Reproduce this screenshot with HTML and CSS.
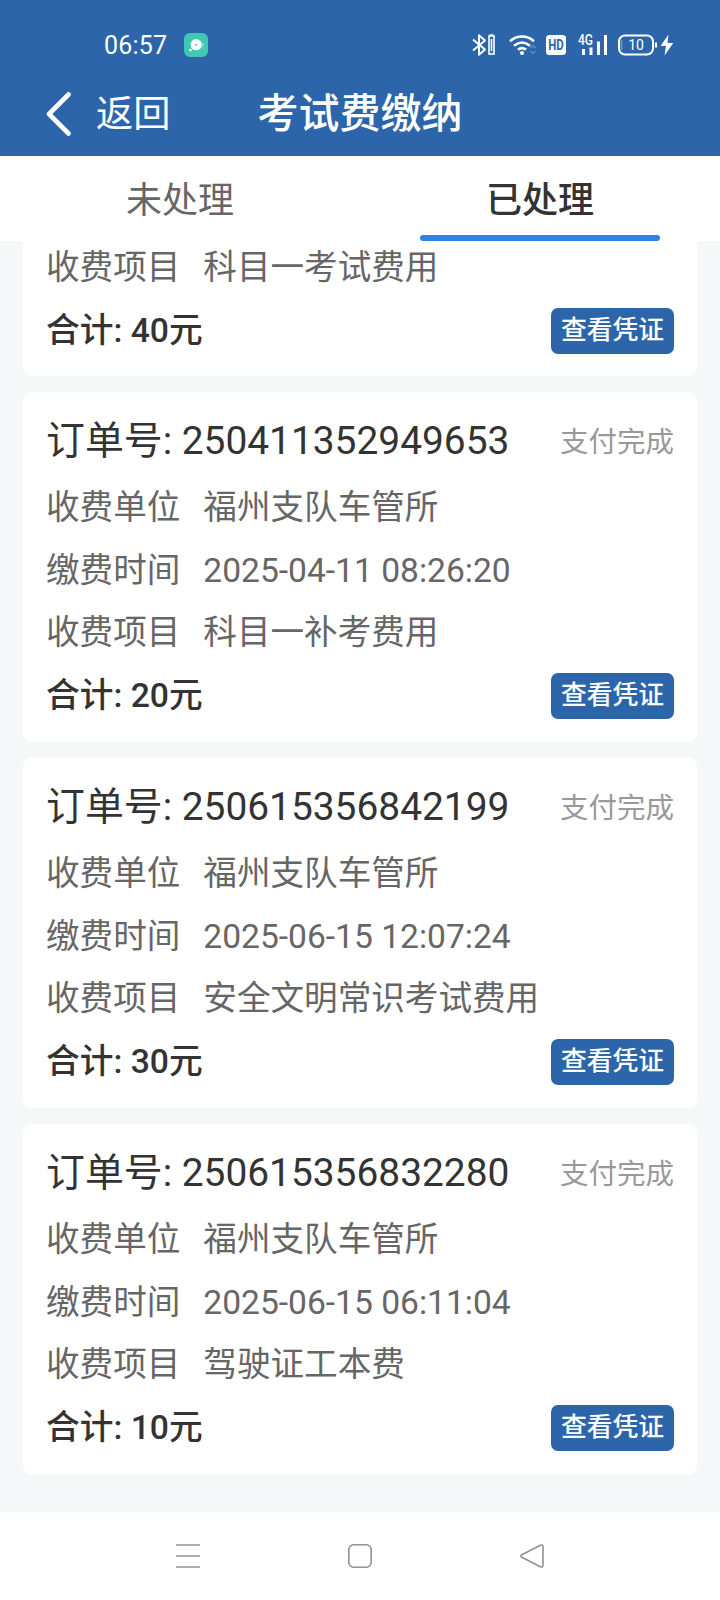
FILE: index.html
```html
<!DOCTYPE html>
<html lang="zh-CN">

<head>
    <meta charset="UTF-8">
    <meta name="viewport" content="width=device-width, initial-scale=1.0">
    <title>考试费缴纳</title>

    <link rel="stylesheet" href="styles.css">
</head>

<body>
    <header class="header">
        <div class="status">
            <span class="status__time">06:57</span>
            <svg class="status__app" width="24" height="24" viewBox="0 0 24 24">
                <rect width="24" height="24" rx="6" fill="#41c8b4" />
                <circle cx="12.2" cy="11.7" r="5.6" fill="#fff" />
                <circle cx="12.2" cy="11.9" r="1" fill="#41c8b4" />
                <circle cx="6.4" cy="17" r="1.3" fill="#fff" />
                <path d="M19 10v3M19 14.3v1" stroke="#a6e6dc" stroke-width="1.2" />
            </svg>
            <!-- 蓝牙、wifi、HD、信号、电池 -->
            <svg class="status__icons" width="208" height="24" viewBox="0 0 208 24" fill="none" stroke="#fff">
                <path d="M1 6.5l12 10-6 5.3V2.2l6 5.3-12 10" stroke-width="2" stroke-linejoin="round" />
                <rect x="17" y="3" width="5" height="18" stroke-width="1.6" />
                <path d="M17.5 2h4M19.5 6v12" stroke-width="1.6" />
                <path d="M38 8.2c7-6.2 17-6.2 24 0M42 12.7c5-4 11-4 16 0M46 16.6c2.5-1.9 5.5-1.9 8 0" stroke-width="2.6" />
                <circle cx="50" cy="20" r="2" fill="#fff" stroke="none" />
                <path d="M58.5 15l2.5-2.5 2.5 2.5M58.5 18l2.5 2.5 2.5-2.5" stroke="#5f8fc6" stroke-width="1.5" />
                <rect x="74" y="2" width="20" height="20" rx="3.5" fill="#fff" stroke="none" />
                <text x="84" y="17.3" class="hd" text-anchor="middle" textLength="15.5" lengthAdjust="spacingAndGlyphs">HD</text>
                <text x="106" y="12" class="net" textLength="15" lengthAdjust="spacingAndGlyphs">4G</text>
                <path d="M111.5 16v6M119 14.5v7.5M126.5 8.5v13.5M133.5 2v20" stroke-width="3" />
                <rect x="147" y="2.5" width="34" height="19" rx="6" stroke-width="2" />
                <path d="M184 9.5v5" stroke-width="2.2" />
                <path d="M149.5 7v10" stroke="#6795c9" stroke-width="2" />
                <text x="164" y="17" class="power" text-anchor="middle">10</text>
                <path d="M196.5 1.5l-8 11.500h5.500l-1.500 9.500 8.800-12.500h-5.800z" fill="#fff" stroke="none" />
            </svg>
        </div>
        <div class="nav">
            <a class="nav__back">
                <svg width="26" height="44" viewBox="0 0 26 44" fill="none" stroke="#fff" stroke-width="4.6" stroke-linecap="round" stroke-linejoin="round">
                    <path d="M22.5 2.5L3 22l19.5 19.5" />
                </svg>
                <span>返回</span>
            </a>
            <h1 class="nav__title">考试费缴纳</h1>
        </div>
    </header>

    <div class="tabs">
        <div class="tab">未处理</div>
        <div class="tab tab--active">已处理</div>
    </div>

    <main class="list">
        <section class="card card--cut">
            <div class="row"><span class="label">收费项目</span><span>科目一考试费用</span></div>
            <div class="total"><span>合计: 40元</span><button class="btn">查看凭证</button></div>
        </section>

        <section class="card">
            <div class="order"><span>订单号: 250411352949653</span><span class="state">支付完成</span></div>
            <div class="row"><span class="label">收费单位</span><span>福州支队车管所</span></div>
            <div class="row"><span class="label">缴费时间</span><span>2025-04-11 08:26:20</span></div>
            <div class="row"><span class="label">收费项目</span><span>科目一补考费用</span></div>
            <div class="total"><span>合计: 20元</span><button class="btn">查看凭证</button></div>
        </section>

        <section class="card">
            <div class="order"><span>订单号: 250615356842199</span><span class="state">支付完成</span></div>
            <div class="row"><span class="label">收费单位</span><span>福州支队车管所</span></div>
            <div class="row"><span class="label">缴费时间</span><span>2025-06-15 12:07:24</span></div>
            <div class="row"><span class="label">收费项目</span><span>安全文明常识考试费用</span></div>
            <div class="total"><span>合计: 30元</span><button class="btn">查看凭证</button></div>
        </section>

        <section class="card">
            <div class="order"><span>订单号: 250615356832280</span><span class="state">支付完成</span></div>
            <div class="row"><span class="label">收费单位</span><span>福州支队车管所</span></div>
            <div class="row"><span class="label">缴费时间</span><span>2025-06-15 06:11:04</span></div>
            <div class="row"><span class="label">收费项目</span><span>驾驶证工本费</span></div>
            <div class="total"><span>合计: 10元</span><button class="btn">查看凭证</button></div>
        </section>
    </main>

    <footer class="keys">
        <svg width="24" height="24" viewBox="0 0 24 24">
            <path d="M0 1h24M0 12h24M0 23h24" />
        </svg>
        <svg width="24" height="24" viewBox="0 0 24 24">
            <rect x=".8" y=".8" width="22.4" height="22.4" rx="5" />
        </svg>
        <svg width="24" height="24" viewBox="0 0 24 24">
            <path d="M1.8 10.7L20.3 1.2Q22.8.3 23 2.8V21.2Q22.8 23.7 20.3 22.8L1.8 13.3Q-.2 12 1.8 10.7z" />
        </svg>
    </footer>
</body>

</html>
```
FILE: styles.css
```css
* {
    box-sizing: border-box;
}

body {
    margin: 0;
    width: 720px;
    height: 1600px;
    display: flex;
    flex-direction: column;
    overflow: hidden;
    background-color: #f4f8f9;
    color: #333;
    font-family: Roboto, "Noto Sans CJK SC", sans-serif;
}

/* 顶部 */
.header {
    height: 156px;
    background-color: #2c65a9;
    color: #fff;
}

.status {
    display: flex;
    align-items: center;
    height: 70px;
    padding: 20px 40px 0 104px;
}

.status__time {
    width: 80px;
    font-size: 25px;
    letter-spacing: .2px;
}

.status__icons {
    margin-left: auto;
}

.hd,
.net,
.power {
    fill: #fff;
    stroke: none;
    font-size: 14px;
}

.hd {
    fill: #2c65a9;
    font-weight: bold;
    font-size: 15px;
}

.net {
    font-weight: 500;
}

.nav {
    display: grid;
    grid-template-columns: 1fr auto 1fr;
    align-items: center;
    height: 86px;
    padding-left: 46px;
    line-height: 86px;
}

.nav__back {
    display: flex;
    align-items: center;
    gap: 24px;
    font-size: 37.2px;
}

.nav__back span {
    padding-top: 1px;
}

.nav__title {
    margin: 0 46px 0 0;
    font-size: 41px;
    font-weight: 500;
}

/* 选项卡 */
.tabs {
    display: flex;
    height: 85px;
    background-color: #fff;
}

.tab {
    flex: 1;
    display: flex;
    flex-direction: column;
    align-items: center;
    font-size: 36px;
    line-height: 90px;
    color: #666;
}

.tab--active {
    color: #333;
    font-weight: 500;
}

.tab--active::after {
    content: "";
    width: 240px;
    height: 6px;
    margin-top: -11px;
    border-radius: 3px;
    background-color: #2b83e2;
}

/* 订单列表 */
.list {
    display: flex;
    flex-direction: column;
    gap: 16px;
    height: 1271px;
    padding: 0 23px;
}

.card {
    flex: none;
    height: 350px;
    padding: 15px 23px 0;
    border-radius: 8px;
    background-color: #fff;
}

/* 滚动后只露出下半部分 */
.card--cut {
    display: flex;
    flex-direction: column;
    justify-content: flex-end;
    height: 135px;
    padding-top: 0;
    padding-bottom: 14.5px;
    border-radius: 0 0 8px 8px;
}

.order,
.total {
    display: flex;
    align-items: center;
    justify-content: space-between;
}

.order {
    align-items: flex-start;
    height: 70px;
    font-size: 38.88px;
    line-height: 68px;
}

.state {
    padding-top: 2px;
    font-size: 28.5px;
    color: #999;
}

.row {
    display: flex;
    flex: none;
    gap: 23px;
    height: 62.5px;
    line-height: 62.5px;
    font-size: 33.6px;
    color: #666;
}

.total {
    flex: none;
    height: 62px;
    font-size: 33.7px;
    font-weight: 500;
    line-height: 62px;
}

.btn {
    width: 123px;
    height: 46px;
    padding: 0 0 2px;
    border: 0;
    border-radius: 7px;
    background-color: #2c65a9;
    color: #fff;
    font: 500 25.8px/42px Roboto, "Noto Sans CJK SC", sans-serif;
}

/* 底部按键 */
.keys {
    display: flex;
    justify-content: center;
    align-items: center;
    gap: 148px;
    height: 88px;
    background-color: #fff;
}

.keys svg {
    fill: none;
    stroke: #929292;
    stroke-width: 1.6;
}
```
